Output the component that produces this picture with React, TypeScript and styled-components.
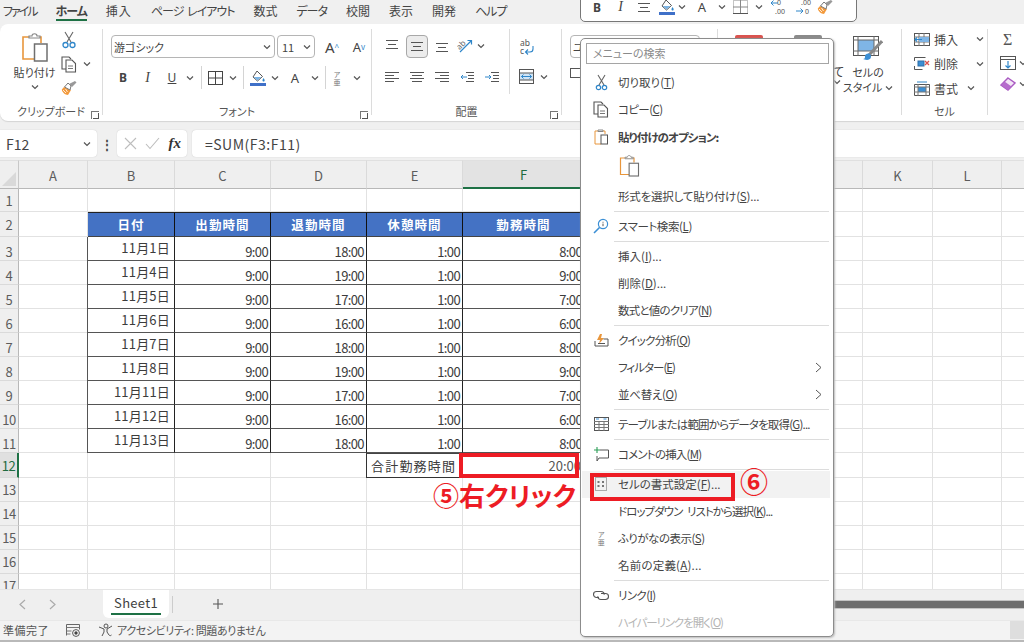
import React from "react";
import styled, { createGlobalStyle } from "styled-components";

const Global = createGlobalStyle`
  html, body { margin: 0; padding: 0; background: #f0f0f0; }
  * { box-sizing: border-box; }
  body { font-family: "Noto Sans CJK JP", "Noto Sans", sans-serif; font-feature-settings: "palt"; color: #444; }
`;

const Page = styled.div`
  position: relative; width: 1024px; height: 642px; overflow: hidden;
  display: flex; flex-direction: column; background: #f0f0f0;
`;

/* ---------- tabs ---------- */
const TabBar = styled.div`
  height: 24px; display: flex; align-items: center; gap: 19px; padding: 0 0 3px 3px; font-size: 12px; color: #444; flex: none;
`;
const Tab = styled.div<{ $active?: boolean; $ls?: number; $ws?: number }>`
  position: relative; white-space: pre; font-weight: ${p => (p.$active ? 700 : 400)};
  letter-spacing: ${p => p.$ls ?? 0}px; word-spacing: ${p => p.$ws ?? 0}px;
  &::after { content: ""; display: ${p => (p.$active ? "block" : "none")}; position: absolute; left: 0; right: 0; bottom: -2px; height: 2px; background: #1e7145; }
`;

/* ---------- ribbon ---------- */
const Ribbon = styled.div`
  height: 97px; flex: none; background: #fff; border-radius: 8px 0 0 8px; display: flex; padding: 5px 0 0; box-shadow: 0 1px 1px #d4d4d4;
`;
const Group = styled.div<{ $w: number; $last?: boolean }>`
  width: ${p => p.$w}px; flex: none; height: 86px; position: relative; display: flex; flex-direction: column;
  border-right: ${p => (p.$last ? "none" : "1px solid #dcdcdc")};
`;
const GroupBody = styled.div`flex: 1; min-height: 0; display: flex;`;
const GroupLabel = styled.div`
  height: 17px; margin-bottom: -5px; font-size: 11px; line-height: 17px; text-align: center; color: #555;
`;
const Launcher = styled.div`
  position: absolute; right: 3px; bottom: -4px; width: 8px; height: 8px; border: 1px solid #777; border-width: 1px 0 0 1px;
  &::after { content: ""; position: absolute; right: 0; bottom: 0; width: 5px; height: 5px; border: 1px solid #555; border-width: 0 1px 1px 0; }
`;
const ClipCol = styled.div`
  width: 61px; display: flex; flex-direction: column; align-items: center; font-size: 11px; line-height: 14px; padding-top: 4px; padding-left: 8px;
`;
const PasteCaption = styled.span`margin-top: 2px;`;
const PasteCaret = styled.div`margin-top: 5px;`;
const ClipSide = styled.div`display: flex; flex-direction: column; gap: 6px; padding-top: 2px;`;
const SideRow = styled.div`display: flex; align-items: center; gap: 5px; height: 18px;`;

const FontCol = styled.div`display: flex; flex-direction: column; padding: 6px 0 0 8px; gap: 8px;`;
const Row = styled.div<{ $gap?: number; $ml?: number; $mt?: number }>`
  display: flex; align-items: center; gap: ${p => p.$gap ?? 0}px; margin-left: ${p => p.$ml ?? 0}px; margin-top: ${p => p.$mt ?? 0}px;
`;
const Combo = styled.div<{ $w: number }>`
  width: ${p => p.$w}px; height: 23px; border: 1px solid #b5b5b5; border-radius: 4px; display: flex; align-items: center;
  justify-content: space-between; padding: 0 3px 0 2px; font-size: 11px; color: #444; flex: none; background: #fff; white-space: nowrap; overflow: hidden;
`;
const ComboValue = styled.span`padding-left: 2px;`;
const TB = styled.div<{ $w?: number; $italic?: boolean; $bold?: boolean; $under?: boolean; $size?: number }>`
  width: ${p => p.$w ?? 24}px; height: 22px; display: flex; align-items: center; justify-content: center; flex: none;
  font-family: ${p => (p.$italic ? '"Liberation Serif", serif' : '"Noto Sans", sans-serif')};
  font-style: ${p => (p.$italic ? "italic" : "normal")}; font-weight: ${p => (p.$bold ? 700 : 400)};
  text-decoration: ${p => (p.$under ? "underline" : "none")}; font-size: ${p => p.$size ?? 13}px; color: #444;
`;
const Caret = styled.sup`font-size: 8px; color: #2f86c9;`;
const ChevBox = styled.div<{ $ml?: number }>`margin-left: ${p => p.$ml ?? 0}px; flex: none; display: flex;`;
const VSep = styled.div<{ $ml?: number }>`width: 1px; height: 23px; background: #d4d4d4; flex: none; margin: 0 4px 0 ${p => p.$ml ?? 4}px;`;
const Furi = styled.div<{ $w?: number }>`font-size: 7px; line-height: 8px; text-align: center; color: #777; width: ${p => p.$w ?? 22}px; flex: none;`;

const AlignGrid = styled.div`
  display: grid; grid-template-columns: repeat(5, 25px); grid-auto-rows: 22px; row-gap: 9px; padding: 6px 0 0 7px; width: 138px; align-items: center; justify-items: center;
`;
const Pressed = styled.div`
  width: 22px; height: 23px; border: 1px solid #a8a8a8; border-radius: 4px; background: #ececec; display: flex; align-items: center; justify-content: center;
`;
const AlignSide = styled.div`
  display: flex; flex-direction: column; gap: 9px; padding: 9px 0 0 9px; width: 52px; height: 65px; border-left: 1px solid #dcdcdc;
`;

const NumCol = styled.div`padding: 6px 0 0 8px; display: flex; flex-direction: column; gap: 9px; font-size: 11px;`;
const PeekRow = styled.div`display: flex; padding: 6px 0 0 17px; gap: 31px; width: 122px; flex: none; align-items: flex-start; position: relative;`;
const Peek = styled.div<{ $c: string }>`
  width: 28px; height: 4px; background: ${p => p.$c}; border-radius: 2px 2px 0 0; flex: none;
`;
const TableWord = styled.div`font-size: 12px; line-height: 14px; position: absolute; left: 115px; top: 36px; white-space: nowrap;`;
const StyleBtn = styled.div`
  display: flex; flex-direction: column; align-items: center; font-size: 11px; line-height: 15px; padding-top: 7px; width: 56px; flex: none;
`;
const StyleCaption = styled.span`margin-top: 2px;`;
const CellsCol = styled.div`display: flex; flex-direction: column; gap: 6.5px; padding: 1px 0 0 12px; font-size: 12px;`;
const CellRow = styled.div`display: flex; align-items: center; height: 18px; gap: 4px; white-space: nowrap;`;
const CellLabel = styled.span<{ $w: number }>`width: ${p => p.$w}px;`;
const EditCol = styled.div`display: flex; flex-direction: column; gap: 7px; padding: 2px 0 0 12px;`;
const Sigma = styled.span`font-size: 16px; line-height: 18px; padding-left: 3px; font-family: "Liberation Serif", serif; color: #555;`;

/* ---------- formula bar ---------- */
const FormulaBar = styled.div`
  flex: none; height: 27px; margin-top: 9px; display: flex; align-items: stretch;
`;
const NameBox = styled.div`
  width: 97px; background: #fff; border-radius: 0 4px 4px 0; display: flex; align-items: center; justify-content: space-between; padding: 0 6px; font-size: 14px; box-shadow: 0 0 1px #bbb;
`;
const Dots = styled.div`width: 20px; display: flex; align-items: center; justify-content: center; font-weight: 700; font-size: 12px; color: #444;`;
const FxBox = styled.div`
  width: 70px; background: #fff; border-radius: 4px; display: flex; align-items: center; justify-content: space-around; padding: 0 2px 0 3px; box-shadow: 0 0 1px #bbb;
`;
const Fx = styled.span`font-family: "Liberation Serif", serif; font-style: italic; font-weight: 700; font-size: 15px; color: #333;`;
const FormulaInput = styled.div`
  flex: 1; margin-left: 5px; background: #fff; border-radius: 4px 0 0 4px; display: flex; align-items: center; padding-left: 13px; font-size: 14px; letter-spacing: .5px; box-shadow: 0 0 1px #bbb;
`;

/* ---------- sheet ---------- */
const Sheet = styled.div`
  flex: none; height: 429px; margin-top: 3px; background: #fff; overflow: hidden;
`;
const SheetGrid = styled.div`
  display: grid;
  grid-template-columns: 19px 69px 87px 96px 96px 96px 122px 68px 70px 70px 70px 70px 69px 70px;
  grid-template-rows: 29px 23px 25px repeat(9, 24px) 25px repeat(5, 24px);
`;
const Corner = styled.div`
  background: #efefef; border-right: 1px solid #c8c8c8; border-bottom: 1px solid #b8b8b8; border-top: 1px solid #e0e0e0; position: relative;
  &::after { content: ""; position: absolute; right: 2px; bottom: 2px; border: 7px solid; border-color: transparent #d9d9d9 #d9d9d9 transparent; }
`;
const ColHead = styled.div<{ $sel?: boolean }>`
  background: ${p => (p.$sel ? "#e3e3e3" : "#efefef")}; border-top: 1px solid #e0e0e0;
  border-right: 1px solid #dadada; border-bottom: ${p => (p.$sel ? "2px solid #1e7145" : "1px solid #b8b8b8")};
  display: flex; align-items: center; justify-content: center; font-size: 13px; color: ${p => (p.$sel ? "#1e6b3f" : "#5c5c5c")}; padding-top: 1px;
`;
const RowHead = styled.div<{ $sel?: boolean; $low?: boolean }>`
  background: ${p => (p.$sel ? "#e0e0e0" : "#efefef")}; border-right: ${p => (p.$sel ? "2px solid #1e7145" : "1px solid #b8b8b8")};
  border-bottom: 1px solid #dadada; font-size: 13px; color: ${p => (p.$sel ? "#1e6b3f" : "#5c5c5c")};
  display: flex; align-items: center; justify-content: center; letter-spacing: -.4px; white-space: nowrap;
  padding-top: ${p => (p.$low ? 5 : 0)}px;
`;
const Cell = styled.div`border-right: 1px solid #e2e2e2; border-bottom: 1px solid #e2e2e2;`;
const HeadCell = styled.div`
  background: #4472c4; color: #fff; font-size: 12.5px; font-weight: 700; letter-spacing: 1.1px;
  border-top: 1px solid #222; border-right: 1px solid #111; display: flex; align-items: center; justify-content: center; border-bottom: 1px solid #444;
`;
const DataCell = styled.div<{ $date?: boolean }>`
  border-right: 1px solid #222; border-bottom: 1px solid #555; ${p => (p.$date ? "border-left: 1px solid #555; margin-left: -1px;" : "")}
  display: flex; justify-content: flex-end; align-items: flex-end; font-size: 13px; color: #3c3c3c; white-space: nowrap;
  line-height: 17px; padding: 0 ${p => (p.$date ? 4 : 2)}px ${p => (p.$date ? 4 : 0)}px 0; letter-spacing: ${p => (p.$date ? ".2px" : "-.6px")};
`;
const TotalLabel = styled.div`
  border: 1px solid #333; border-top-color: #444; margin-left: -1px; font-size: 13px; letter-spacing: 1.2px; color: #3c3c3c; display: flex; align-items: center; padding-left: 4px; white-space: nowrap; overflow: hidden;
`;
const TotalCell = styled.div`
  display: flex; justify-content: flex-end; align-items: center; font-size: 13px; padding-right: 4px; color: #555; border-bottom: 1px solid #e2e2e2;
`;

/* ---------- bottom ---------- */
const SheetTabs = styled.div`
  flex: none; height: 31px; background: #efefef; display: flex; align-items: flex-start; border-top: 1px solid #e5e5e5;
`;
const NavArrows = styled.div`width: 103px; display: flex; padding: 9px 0 0 18px; gap: 23px; flex: none;`;
const SheetTab = styled.div`
  position: relative; width: 66px; height: 28px; background: #fff; border-radius: 0 0 6px 6px; font-size: 13px; color: #3e3e3e; text-align: center; line-height: 25px; flex: none; letter-spacing: .3px;
  &::after { content: ""; position: absolute; left: 8px; right: 8px; bottom: 3px; height: 2px; background: #1e7145; }
`;
const PlusWrap = styled.div`width: 1px; height: 17px; background: #ccc; margin: 6px 0 0 3px; flex: none;`;
const Plus = styled.div`margin: 8px 0 0 39px; width: 16px; flex: none;`;
const ScrollArea = styled.div`margin: 10px 0 0 auto; width: 194px; height: 9px; background: #6e6e6e; border: solid #c4c4c4; border-width: 1px 0;`;
const StatusBar = styled.div`
  flex: 1; background: #f3f3f3; display: flex; align-items: center; font-size: 11px; color: #555; padding: 0 0 1px 3px; border-top: 1px solid #e8e8e8; border-bottom: 2px solid #b9b9b9;
`;
const StatusEnd = styled.div`margin-left: auto; width: 14px; align-self: stretch; background: #dedede;`;
const StatusItem = styled.div<{ $ml: number; $ls?: number }>`margin-left: ${p => p.$ml}px; display: flex; align-items: center; gap: 3px; white-space: nowrap; letter-spacing: ${p => p.$ls ?? 0}px;`;
const StatusReady = styled.span`letter-spacing: .5px;`;

/* ---------- mini toolbar ---------- */
const MiniBar = styled.div`
  position: absolute; left: 580px; top: -14px; width: 277px; height: 36px; background: #fff; border: 1px solid #777; border-radius: 5px;
  display: flex; align-items: flex-end; padding: 0 0 3px 4px; z-index: 5;
`;

/* ---------- context menu ---------- */
const Menu = styled.div`
  position: absolute; left: 580px; top: 38px; width: 254px; height: 599px; background: #fff; border: 1.5px solid #8c8c8c; border-radius: 5px; z-index: 6;
  padding: 4px 4px 0 1px; display: flex; flex-direction: column; box-shadow: 1px 1px 2px #bbb;
`;
const SearchBox = styled.div`
  height: 21px; margin: 0 0 4.5px 4px; border: 1px solid #a5a5a5; padding-left: 6px; font-size: 11px; line-height: 19px; color: #8a8a8a; flex: none;
`;
const Item = styled.div<{ $hover?: boolean; $disabled?: boolean; $bold?: boolean; $h?: number; $ls?: number; $ws?: number }>`
  height: ${p => p.$h ?? 27}px; flex: none; display: flex; align-items: center; font-size: 11.5px; white-space: pre; letter-spacing: ${p => p.$ls ?? 0}px; word-spacing: ${p => p.$ws ?? 0}px;
  background: ${p => (p.$hover ? "#f2f2f2" : "transparent")}; color: ${p => (p.$disabled ? "#b5b5b5" : "#444")};
  font-weight: ${p => (p.$bold ? 700 : 400)}; margin-right: -1px;
  u { text-underline-offset: 1px; }
`;
const ItemIcon = styled.div`width: 36px; flex: none; display: flex; align-items: center; justify-content: center; padding-left: 2px;`;
const ItemArrow = styled.div`margin-left: auto; margin-right: 8px; display: flex;`;
const PasteRow = styled.div`height: 32px; flex: none; padding-left: 37px; display: flex; align-items: center;`;
const Sep = styled.div`height: 1px; background: #dcdcdc; margin: 1px 0 1px 32px; flex: none;`;

/* ---------- annotations ---------- */
const RedBox = styled.div<{ $x: number; $y: number; $w: number; $h: number }>`
  position: absolute; left: ${p => p.$x}px; top: ${p => p.$y}px; width: ${p => p.$w}px; height: ${p => p.$h}px; border: 4px solid #ed1c24; z-index: 8;
`;
const RedText = styled.div<{ $x: number; $y: number; $size: number }>`
  position: absolute; left: ${p => p.$x}px; top: ${p => p.$y}px; font-size: ${p => p.$size}px; line-height: 1; color: #ed1c24; font-weight: 700; white-space: nowrap; z-index: 8;
`;

/* ---------- icons ---------- */
const IconSvg = styled.svg`display: block; flex: none;`;
type SP = { s?: number };
const Svg = ({ w, h, children }: { w: number; h: number; children: React.ReactNode }) => (
  <IconSvg width={w} height={h} viewBox={`0 0 ${w} ${h}`} fill="none">{children}</IconSvg>
);
const Chev = ({ c = "#555" }: { c?: string }) => (
  <Svg w={8} h={6}><path d="M1 1.5 4 4.5 7 1.5" stroke={c} strokeWidth="1.2" /></Svg>
);
const PasteIcon = ({ s = 1 }: SP) => (
  <IconSvg width={28 * s} height={30 * s} viewBox="0 0 28 30" fill="none">
    <path d="M7 4H2v22h12" stroke="#e8963c" strokeWidth="1.6" />
    <path d="M7 4h13v6" stroke="#e8963c" strokeWidth="1.6" />
    <path d="M8 5V3h3c0-3 5-3 5 0h3v2z" fill="#fff" stroke="#888" strokeWidth="1.2" />
    <rect x="13.5" y="11" width="12.5" height="17" fill="#fff" stroke="#6f6f6f" strokeWidth="1.5" />
  </IconSvg>
);
const ScissorsIcon = () => (
  <Svg w={16} h={18}>
    <path d="M4 1 10 11M12 1 6 11" stroke="#666" strokeWidth="1.1" />
    <circle cx="4.5" cy="14" r="2.5" stroke="#2f86c9" strokeWidth="1.3" />
    <circle cx="11.5" cy="14" r="2.5" stroke="#2f86c9" strokeWidth="1.3" />
  </Svg>
);
const CopyIcon = () => (
  <Svg w={17} h={17}>
    <path d="M5 13H1V1h7l2 2" stroke="#555" strokeWidth="1.1" />
    <path d="M5 4h6l3.5 3.5V16H5z" fill="#fff" stroke="#555" strokeWidth="1.1" />
    <path d="M7 10h5M7 12.5h5" stroke="#777" />
  </Svg>
);
const BrushIcon = () => (
  <Svg w={17} h={16}>
    <path d="M3 7 10 10 7 15C4 15 1 12 0.8 9.5z" fill="#f39a3c" />
    <path d="M3.5 7 7 3l3 3-1 4z" fill="#fff" stroke="#777" />
    <path d="M8 4l6-3 1.5 1.5L11 7" fill="#999" />
    <path d="M2 10l3 3M4.5 9l2 3" stroke="#fff" strokeWidth=".8" />
  </Svg>
);
const BorderIcon = ({ dotted }: { dotted?: boolean }) => (
  <Svg w={15} h={14}>
    <rect x=".5" y=".5" width="14" height="13" stroke={dotted ? "#888" : "#444"} strokeDasharray={dotted ? "1 1" : undefined} />
    <path d="M7.5 0v14M0 7h15" stroke={dotted ? "#888" : "#444"} />
    {dotted && <path d="M0 13.5h15" stroke="#555" />}
  </Svg>
);
const FillIcon = () => (
  <Svg w={16} h={16}>
    <path d="M7 1 12.5 6.5 7.5 11 3 7z" fill="#fff" stroke="#555" />
    <path d="M3.5 7h8L7.5 10.5z" fill="#7cb4e4" />
    <path d="M13.5 8c1 1.5 1.5 2 1 3s-2 .5-2-.5.5-1.5 1-2.5z" fill="#2f86c9" />
    <rect x="0" y="13" width="16" height="3" fill="#3f70c8" />
  </Svg>
);
const Lines = ({ kind = "c", w = 14 }: { kind?: "c" | "l" | "r" | "t" | "m" | "b"; w?: number }) => {
  const short = kind === "c" ? 2 : 0;
  return (
    <Svg w={w} h={12}>
      {kind === "t" || kind === "m" || kind === "b" ? (
        <path d={kind === "t" ? "M1 .5h12M3 4.5h8M1 8.5h12" : kind === "m" ? "M1 2.5h12M3 6.5h8M1 10.5h12" : "M1 3.5h12M3 7.5h8M1 11.5h12"} stroke="#555" />
      ) : (
        <path d={
          kind === "l" ? "M0 1.5h14M0 4.5h9M0 7.5h14M0 10.5h9" :
          kind === "r" ? "M0 1.5h14M5 4.5h9M0 7.5h14M5 10.5h9" :
          `M0 1.5h14M${short} 4.5h10M0 7.5h14M${short} 10.5h10`} stroke="#555" />
      )}
    </Svg>
  );
};
const OrientIcon = () => (
  <Svg w={16} h={14}>
    <path d="M3 13 14 2M10.5 1.5h4v4" stroke="#2f86c9" strokeWidth="1.2" />
    <text x="0" y="9" fontSize="8" fill="#666" transform="rotate(-45 4 7)" fontFamily="Noto Sans">ab</text>
  </Svg>
);
const WrapIcon = () => (
  <Svg w={16} h={18}>
    <text x="1" y="7.5" fontSize="8.5" fill="#555" fontFamily="Noto Sans">ab</text>
    <text x="1" y="16" fontSize="8.5" fill="#555" fontFamily="Noto Sans">c</text>
    <path d="M14 8v3c0 2-1 3-3 3H7M9 11.5 6.5 14 9 16.5" stroke="#2f86c9" strokeWidth="1.1" />
  </Svg>
);
const MergeIcon = () => (
  <Svg w={15} h={15}>
    <rect x=".5" y=".5" width="14" height="14" stroke="#555" />
    <rect x="1" y="4" width="13" height="7" fill="#cfe4f6" />
    <path d="M0 4h15M0 11h15" stroke="#555" />
    <path d="M2.5 7.5h10M4.5 5.5l-2 2 2 2M10.5 5.5l2 2-2 2" stroke="#2f86c9" />
  </Svg>
);
const Indent = ({ inc }: { inc?: boolean }) => (
  <Svg w={14} h={12}>
    <path d="M6 1.5h8M8 4.5h6M8 7.5h6M6 10.5h8" stroke="#555" />
    <path d={inc ? "M0 6h6M4 4l2 2-2 2" : "M1 6h6M3 4 1 6l2 2"} stroke="#2f86c9" />
  </Svg>
);
const DecIcon = ({ inc }: { inc?: boolean }) => (
  <Svg w={16} h={16}>
    <text x={inc ? 7 : 5} y="6" fontSize="7" fill="#555" fontFamily="Noto Sans">{inc ? "0" : ".00"}</text>
    <text x={inc ? 5 : 9} y="15" fontSize="7" fill="#555" fontFamily="Noto Sans">{inc ? ".00" : "0"}</text>
    <path d={inc ? "M8 4H1M3.5 1.5 1 4l2.5 2.5" : "M0 12h7M4.5 9.5 7 12l-2.5 2.5"} stroke="#2f86c9" />
  </Svg>
);
const CellStyleIcon = () => (
  <Svg w={30} h={27}>
    <rect x=".5" y=".5" width="25" height="19" stroke="#555" fill="#fff" />
    <rect x="5" y="4" width="16" height="11" fill="#7fb5e6" />
    <path d="M0 4h26M0 15h26M5 0v20M21 0v20" stroke="#666" />
    <path d="M29 5 16 19" stroke="#888" strokeWidth="3" />
    <path d="M17 18c2 2 1 6-3 6-2 0-3-1-4-1 2 0 2-1 2-3s3-3 5-2z" fill="#3b8fd5" />
  </Svg>
);
const CellIns = () => (
  <Svg w={16} h={13}>
    <rect x=".5" y=".5" width="15" height="12" stroke="#555" />
    <path d="M0 4h16M0 9h16M5 0v13M10 0v13" stroke="#777" />
    <rect x="5" y="4" width="10" height="5" fill="#7fb5e6" />
    <path d="M1 6.5h7M3 4.5l-2 2 2 2" stroke="#2f86c9" strokeWidth="1.2" />
  </Svg>
);
const CellDel = () => (
  <Svg w={16} h={13}>
    <path d="M.5 4V.5h11M.5 9v3.5h8" stroke="#555" />
    <rect x="4" y="4" width="6" height="5" fill="#3b8fd5" stroke="#2f6ea8" />
    <path d="M11 4l4 4M15 4l-4 4" stroke="#d9534f" strokeWidth="1.3" />
  </Svg>
);
const CellFmt = () => (
  <Svg w={16} h={15}>
    <path d="M.5 3.5v11h15v-11z" stroke="#555" />
    <rect x="4" y="6" width="8" height="5" fill="#3b8fd5" />
    <path d="M0 6h16M0 11h16M4 3v12M12 3v12" stroke="#777" />
    <path d="M3 1h10" stroke="#2f86c9" />
  </Svg>
);
const FillDown = () => (
  <Svg w={16} h={14}>
    <rect x=".5" y=".5" width="15" height="13" stroke="#555" />
    <path d="M0 3.5h16" stroke="#555" />
    <path d="M8 5v7M5.5 9.5 8 12l2.5-2.5" stroke="#2f86c9" strokeWidth="1.2" />
  </Svg>
);
const Eraser = () => (
  <Svg w={16} h={14}>
    <path d="M8 1 15 6 8 13 1 8z" fill="#f3e6f6" stroke="#a95ac2" strokeWidth="1.4" />
    <path d="M4.5 4.5 11.5 9.5 8 13 1 8z" fill="#b56ccc" />
  </Svg>
);
const MenuScissors = () => (
  <Svg w={13} h={17}>
    <path d="M3 1 9 11M10 1 4 11" stroke="#666" strokeWidth="1.1" />
    <circle cx="3.5" cy="13.5" r="2.2" stroke="#2f86c9" strokeWidth="1.2" />
    <circle cx="9.5" cy="13.5" r="2.2" stroke="#2f86c9" strokeWidth="1.2" />
  </Svg>
);
const MenuPaste = () => (
  <Svg w={14} h={16}>
    <path d="M4 2H1v13h6" stroke="#e8963c" />
    <path d="M4 2h7v3" stroke="#e8963c" />
    <path d="M4 2.5V1h5v1.5z" fill="#fff" stroke="#888" />
    <rect x="7" y="6" width="6.5" height="9" fill="#fff" stroke="#555" />
  </Svg>
);
const SmartSearch = () => (
  <Svg w={16} h={16}>
    <circle cx="10" cy="6" r="4.6" stroke="#3b8fd5" strokeWidth="1.2" />
    <path d="M6.5 9.5 1 15" stroke="#3b8fd5" strokeWidth="1.6" />
    <path d="M10 3.8v.9M10 5.6v2.6" stroke="#555" />
  </Svg>
);
const QuickIcon = () => (
  <Svg w={15} h={14}>
    <path d="M6 1 3 7h3l-1 4 5-6H7l1-4z" fill="#e8963c" />
    <path d="M1 8v5h13V6H9.5M4 10.5h7" stroke="#555" />
  </Svg>
);
const TableIcon = () => (
  <Svg w={15} h={14}>
    <rect x=".5" y=".5" width="14" height="13" stroke="#555" />
    <path d="M0 4.5h15M0 7.5h15M0 10.5h15M5 4v10M10 4v10" stroke="#777" />
    <path d="M2 2h3M9.5 2h3" stroke="#3b8fd5" strokeWidth="1.2" />
  </Svg>
);
const CommentIcon = () => (
  <Svg w={15} h={15}>
    <path d="M6 3h8.5v8H5l-2 3v-5" stroke="#555" />
    <path d="M3 0v6M0 3h6" stroke="#2d9d57" strokeWidth="1.1" />
  </Svg>
);
const FormatCell = () => (
  <Svg w={12} h={14}>
    <rect x=".5" y=".5" width="11" height="13" stroke="#aaa" />
    <path d="M2.5 4h2v2h-2zM7 4h2v2H7zM2.5 8h2v2h-2zM7 8h2v2H7z" fill="#777" />
  </Svg>
);
const LinkIcon = () => (
  <Svg w={16} h={11}>
    <path d="M6 7.5H3.5a3 3 0 0 1 0-6H8a3.2 3.2 0 0 1 3.2 3.2" stroke="#555" strokeWidth="1.1" />
    <path d="M8 3.5h4.5a3 3 0 0 1 0 6H8A3.2 3.2 0 0 1 4.8 6.3" stroke="#555" strokeWidth="1.1" />
  </Svg>
);
const RightArrow = () => <Svg w={7} h={11}><path d="M1 1 6 5.5 1 10" stroke="#555" /></Svg>;
const MacroIcon = () => (
  <Svg w={15} h={13}>
    <path d="M.5 11.5v-11h13v5" stroke="#666" />
    <path d="M.5 3.5h13M.5 7h5M.5 10h4" stroke="#777" />
    <circle cx="10" cy="9" r="3.4" fill="#fff" stroke="#555" />
    <circle cx="10" cy="9" r="1.7" fill="#444" />
  </Svg>
);
const AccessIcon = () => (
  <Svg w={16} h={14}>
    <circle cx="8" cy="3" r="2" stroke="#555" />
    <path d="M1 4l5 2v3l-2 4M14 3l-5 3v3l2 3c.8 1 2 .7 2.5 0" stroke="#555" />
  </Svg>
);
const XIcon = () => <Svg w={13} h={13}><path d="M1 1 12 12M12 1 1 12" stroke="#bdbdbd" strokeWidth="1.1" /></Svg>;
const CheckIcon = () => <Svg w={15} h={13}><path d="M1 7 5 11.5 14 1" stroke="#bdbdbd" strokeWidth="1.1" /></Svg>;
const NavL = () => <Svg w={8} h={11}><path d="M7 1 2 5.5 7 10" stroke="#aaa" strokeWidth="1.2" /></Svg>;
const NavR = () => <Svg w={8} h={11}><path d="M1 1 6 5.5 1 10" stroke="#aaa" strokeWidth="1.2" /></Svg>;
const PlusIcon = () => <Svg w={12} h={12}><path d="M6 1v10M1 6h10" stroke="#555" strokeWidth="1.1" /></Svg>;

/* ---------- data ---------- */
const COLS = ["A", "B", "C", "D", "E", "F", "G", "H", "I", "J", "K", "L", ""];
const rows = [
  ["11月1日", "9:00", "18:00", "1:00", "8:00"],
  ["11月4日", "9:00", "19:00", "1:00", "9:00"],
  ["11月5日", "9:00", "17:00", "1:00", "7:00"],
  ["11月6日", "9:00", "16:00", "1:00", "6:00"],
  ["11月7日", "9:00", "18:00", "1:00", "8:00"],
  ["11月8日", "9:00", "19:00", "1:00", "9:00"],
  ["11月11日", "9:00", "17:00", "1:00", "7:00"],
  ["11月12日", "9:00", "16:00", "1:00", "6:00"],
  ["11月13日", "9:00", "18:00", "1:00", "8:00"],
];
const heads = ["日付", "出勤時間", "退勤時間", "休憩時間", "勤務時間"];

const Blank = ({ n }: { n: number }) => <>{Array.from({ length: n }, (_, i) => <Cell key={i} />)}</>;

const Label = ({ t, k, tail = "" }: { t: string; k: string; tail?: string }) => (
  <span>{t}(<u>{k}</u>){tail}</span>
);

export default function App() {
  return (
    <Page>
      <Global />
      <TabBar>
        <Tab $ls={-2}>ファイル</Tab><Tab $active $ls={-1}>ホーム</Tab><Tab $ls={1}>挿入</Tab><Tab $ls={-1} $ws={2}>ページ レイアウト</Tab><Tab>数式</Tab>
        <Tab $ls={-1}>データ</Tab><Tab>校閲</Tab><Tab>表示</Tab><Tab>開発</Tab><Tab $ls={-1}>ヘルプ</Tab>
      </TabBar>

      <Ribbon>
        <Group $w={103}>
          <GroupBody>
            <ClipCol>
              <PasteIcon />
              <PasteCaption>貼り付け</PasteCaption>
              <PasteCaret><Chev /></PasteCaret>
            </ClipCol>
            <ClipSide>
              <SideRow><ScissorsIcon /></SideRow>
              <SideRow><CopyIcon /><Chev /></SideRow>
              <SideRow><BrushIcon /></SideRow>
            </ClipSide>
          </GroupBody>
          <GroupLabel>クリップボード</GroupLabel>
          <Launcher />
        </Group>

        <Group $w={269}>
          <GroupBody>
            <FontCol>
              <Row $gap={2}>
                <Combo $w={164}>游ゴシック<Chev /></Combo>
                <Combo $w={38}><ComboValue>11</ComboValue><Chev /></Combo>
                <TB $w={30} $size={15}>A<Caret>^</Caret></TB>
                <TB $w={20} $size={13}>A<Caret>v</Caret></TB>
              </Row>
              <Row>
                <TB $bold $w={24} $size={12}>B</TB>
                <TB $italic $w={25} $size={14}>I</TB>
                <TB $under $w={24} $size={12}>U</TB>
                <ChevBox $ml={2}><Chev /></ChevBox><VSep $ml={7} />
                <TB $w={18}><BorderIcon /></TB><ChevBox $ml={5}><Chev /></ChevBox><VSep $ml={6} />
                <TB $w={20}><FillIcon /></TB><ChevBox $ml={3}><Chev /></ChevBox>
                <TB $w={32} $size={13}>A</TB><Chev /><VSep $ml={6} />
                <Furi $w={14}>ア<br />亜</Furi><ChevBox $ml={9}><Chev /></ChevBox>
              </Row>
            </FontCol>
          </GroupBody>
          <GroupLabel>フォント</GroupLabel>
          <Launcher />
        </Group>

        <Group $w={190}>
          <GroupBody>
            <AlignGrid>
              <Lines kind="t" /><Pressed><Lines kind="m" /></Pressed><Lines kind="b" /><Row $gap={4} $ml={8}><OrientIcon /><Chev /></Row><span />
              <Lines kind="l" /><Lines kind="c" /><Lines kind="r" /><Indent /><Indent inc />
            </AlignGrid>
            <AlignSide>
              <WrapIcon />
              <Row $gap={6} $mt={4}><MergeIcon /><Chev /></Row>
            </AlignSide>
          </GroupBody>
          <GroupLabel>配置</GroupLabel>
          <Launcher />
        </Group>

        <Group $w={156}>
          <GroupBody>
            <NumCol>
              <Combo $w={130}>ユーザー定義<Chev /></Combo>
              <Row $gap={4}><Svg w={12} h={12}><rect x=".5" y="1.5" width="10" height="9" stroke="#555" /></Svg></Row>
            </NumCol>
          </GroupBody>
          <GroupLabel>数値</GroupLabel>
        </Group>

        <Group $w={184}>
          <GroupBody>
            <PeekRow>
              <Peek $c="#d9534f" /><Peek $c="#8a8a8a" />
              <TableWord>て<br /><Chev /></TableWord>
            </PeekRow>
            <StyleBtn>
              <CellStyleIcon />
              <StyleCaption>セルの</StyleCaption>
              <Row $gap={3}>スタイル<Chev /></Row>
            </StyleBtn>
          </GroupBody>
          <GroupLabel>スタイル</GroupLabel>
        </Group>

        <Group $w={86}>
          <GroupBody>
            <CellsCol>
              <CellRow><CellIns /><CellLabel $w={38}>挿入</CellLabel><Chev /></CellRow>
              <CellRow><CellDel /><CellLabel $w={38}>削除</CellLabel><Chev /></CellRow>
              <CellRow><CellFmt /><CellLabel $w={29}>書式</CellLabel><Chev /></CellRow>
            </CellsCol>
          </GroupBody>
          <GroupLabel>セル</GroupLabel>
        </Group>

        <Group $w={36} $last>
          <EditCol>
            <Row $gap={4}><Sigma>Σ</Sigma></Row>
            <Row $gap={3}><FillDown /><Chev /></Row>
            <Row $gap={3}><Eraser /><Chev /></Row>
          </EditCol>
        </Group>
      </Ribbon>

      <FormulaBar>
        <NameBox>F12<Chev /></NameBox>
        <Dots>⋮</Dots>
        <FxBox><XIcon /><CheckIcon /><Fx>fx</Fx></FxBox>
        <FormulaInput>=SUM(F3:F11)</FormulaInput>
      </FormulaBar>

      <Sheet>
        <SheetGrid>
          <Corner />
          {COLS.map((c, i) => <ColHead key={i} $sel={c === "F"}>{c}</ColHead>)}

          <RowHead>1</RowHead><Blank n={13} />

          <RowHead>2</RowHead><Cell />
          {heads.map(h => <HeadCell key={h}>{h}</HeadCell>)}
          <Blank n={7} />

          {rows.map((r, i) => (
            <React.Fragment key={i}>
              <RowHead $low>{i + 3}</RowHead><Cell />
              <DataCell $date>{r[0]}</DataCell>
              <DataCell>{r[1]}</DataCell><DataCell>{r[2]}</DataCell><DataCell>{r[3]}</DataCell><DataCell>{r[4]}</DataCell>
              <Blank n={7} />
            </React.Fragment>
          ))}

          <RowHead $sel>12</RowHead><Cell /><Blank n={2} /><Cell />
          <TotalLabel>合計勤務時間</TotalLabel>
          <TotalCell>20:00</TotalCell>
          <Blank n={7} />

          {[13, 14, 15, 16, 17].map(n => (
            <React.Fragment key={n}>
              <RowHead>{n}</RowHead><Blank n={13} />
            </React.Fragment>
          ))}
        </SheetGrid>
      </Sheet>

      <SheetTabs>
        <NavArrows><NavL /><NavR /></NavArrows>
        <SheetTab>Sheet1</SheetTab>
        <PlusWrap />
        <Plus><PlusIcon /></Plus>
        <ScrollArea />
      </SheetTabs>

      <StatusBar>
        <StatusReady>準備完了</StatusReady>
        <StatusItem $ml={17}><MacroIcon /></StatusItem>
        <StatusItem $ml={17} $ls={-.4}><AccessIcon />アクセシビリティ: 問題ありません</StatusItem>
        <StatusEnd />
      </StatusBar>

      <RedBox $x={459} $y={453} $w={120} $h={25} />
      <RedText $x={433} $y={482} $size={26}>⑤右クリック</RedText>

      <MiniBar>
        <TB $bold $w={24} $size={12}>B</TB>
        <TB $italic $w={23} $size={14}>I</TB>
        <TB $w={23}><Lines kind="m" /></TB>
        <TB $w={23}><FillIcon /></TB>
        <TB $w={8}><Chev /></TB>
        <TB $w={32} $size={13}>A</TB><TB $w={8}><Chev /></TB>
        <TB $w={29}><BorderIcon dotted /></TB><TB $w={8}><Chev /></TB>
        <TB $w={30}><DecIcon inc /></TB>
        <TB $w={21}><DecIcon /></TB>
        <TB $w={23}><BrushIcon /></TB>
      </MiniBar>

      <Menu>
        <SearchBox>メニューの検索</SearchBox>
        <Item><ItemIcon><MenuScissors /></ItemIcon><Label t="切り取り" k="T" /></Item>
        <Item $ls={-.6}><ItemIcon><CopyIcon /></ItemIcon><Label t="コピー" k="C" /></Item>
        <Item $bold $h={28} $ls={-.9}><ItemIcon><MenuPaste /></ItemIcon>貼り付けのオプション:</Item>
        <PasteRow><PasteIcon s={0.75} /></PasteRow>
        <Item $ls={-.2}><ItemIcon /><Label t="形式を選択して貼り付け" k="S" tail="..." /></Item>
        <Sep />
        <Item $ls={-.4}><ItemIcon><SmartSearch /></ItemIcon><Label t="スマート検索" k="L" /></Item>
        <Sep />
        <Item><ItemIcon /><Label t="挿入" k="I" tail="..." /></Item>
        <Item><ItemIcon /><Label t="削除" k="D" tail="..." /></Item>
        <Item $ls={-.8}><ItemIcon /><Label t="数式と値のクリア" k="N" /></Item>
        <Sep />
        <Item $ls={-.8}><ItemIcon><QuickIcon /></ItemIcon><Label t="クイック分析" k="Q" /></Item>
        <Item $ls={-1}><ItemIcon /><Label t="フィルター" k="E" /><ItemArrow><RightArrow /></ItemArrow></Item>
        <Item $ls={-.3}><ItemIcon /><Label t="並べ替え" k="O" /><ItemArrow><RightArrow /></ItemArrow></Item>
        <Sep />
        <Item $ls={-.8}><ItemIcon><TableIcon /></ItemIcon><Label t="テーブルまたは範囲からデータを取得" k="G" tail="..." /></Item>
        <Sep />
        <Item $ls={-.8}><ItemIcon><CommentIcon /></ItemIcon><Label t="コメントの挿入" k="M" /></Item>
        <Sep />
        <Item $hover><ItemIcon><FormatCell /></ItemIcon><Label t="セルの書式設定" k="F" tail="..." /></Item>
        <Item $ls={-.95} $ws={3}><ItemIcon /><Label t="ドロップダウン リストから選択" k="K" tail="..." /></Item>
        <Item $ls={-.5}><ItemIcon><Furi>ア<br />亜</Furi></ItemIcon><Label t="ふりがなの表示" k="S" /></Item>
        <Item $ls={.2}><ItemIcon /><Label t="名前の定義" k="A" tail="..." /></Item>
        <Sep />
        <Item $ls={-.6}><ItemIcon><LinkIcon /></ItemIcon><Label t="リンク" k="I" /></Item>
        <Item $disabled $ls={-1.1}><ItemIcon /><Label t="ハイパーリンクを開く" k="O" /></Item>
      </Menu>

      <RedBox $x={590} $y={473} $w={145} $h={28} />
      <RedText $x={740} $y={467} $size={28}>⑥</RedText>
    </Page>
  );
}
